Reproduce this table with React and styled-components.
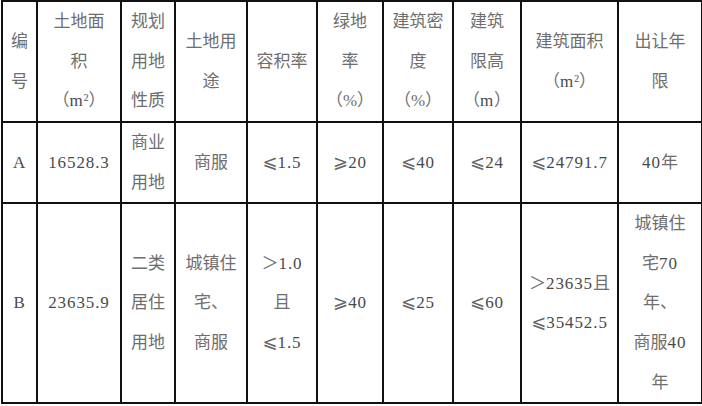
import React from 'react';
import styled, { createGlobalStyle } from 'styled-components';

const GlobalStyle = createGlobalStyle`
  html, body {
    margin: 0;
    padding: 0;
    background: #fff;
  }
  body {
    font-family: "Liberation Serif", "Noto Sans CJK SC", "DejaVu Sans", serif;
  }
`;

// column widths measured from the screenshot
const widths = [35, 84, 54, 72, 70, 66, 70, 68, 97, 84];

const header = [
  ['编', '号'],
  ['土地面', '积', '（m²）'],
  ['规划', '用地', '性质'],
  ['土地用', '途'],
  ['容积率'],
  ['绿地', '率', '（%）'],
  ['建筑密', '度', '（%）'],
  ['建筑', '限高', '（m）'],
  ['建筑面积', '（m²）'],
  ['出让年', '限'],
];

const rows = [
  {
    height: 81,
    cells: [
      ['A'],
      ['16528.3'],
      ['商业', '用地'],
      ['商服'],
      ['⩽1.5'],
      ['⩾20'],
      ['⩽40'],
      ['⩽24'],
      ['⩽24791.7'],
      ['40年'],
    ],
  },
  {
    height: 200,
    cells: [
      ['B'],
      ['23635.9'],
      ['二类', '居住', '用地'],
      ['城镇住', '宅、', '商服'],
      ['＞1.0', '且', '⩽1.5'],
      ['⩾40'],
      ['⩽25'],
      ['⩽60'],
      ['＞23635且', '⩽35452.5'],
      ['城镇住', '宅70', '年、', '商服40', '年'],
    ],
  },
];

const Page = styled.div`
  padding: 0 0 0 1px;
`;

const Table = styled.table`
  border-collapse: collapse;
  table-layout: fixed;
  width: 700px;
  color: #6e6e6e;
  font-size: 17px;
`;

const Row = styled.tr`
  height: ${(p) => p.$h}px;
`;

const Cell = styled.td`
  border: 2px solid #111;
  padding: 0;
  text-align: center;
  vertical-align: middle;
  line-height: 39.6px;
  white-space: nowrap;
  overflow: hidden;
`;

const Line = styled.div`
  height: 39.6px;
`;

// digits and latin letters are a little wider and darker in the original
const Latin = styled.span`
  color: #4a4a4a;
  letter-spacing: 0.9px;
`;

const Sign = styled.span`
  color: #666;
  font-size: 18px;
`;

const renderText = (t) =>
  t.split(/([0-9A-Za-z.]+|[⩽⩾])/).map((part, i) => {
    if (!part) return null;
    if (/^[0-9A-Za-z.]+$/.test(part)) return <Latin key={i}>{part}</Latin>;
    if (/^[⩽⩾]$/.test(part)) return <Sign key={i}>{part}</Sign>;
    return <React.Fragment key={i}>{part}</React.Fragment>;
  });

const renderLines = (lines) =>
  lines.map((t, i) => <Line key={i}>{renderText(t)}</Line>);

export default function App() {
  return (
    <Page>
      <GlobalStyle />
      <Table>
        <colgroup>
          {widths.map((w, i) => (
            <col key={i} style={{ width: w }} />
          ))}
        </colgroup>
        <tbody>
          <Row $h={121}>
            {header.map((c, i) => (
              <Cell key={i}>{renderLines(c)}</Cell>
            ))}
          </Row>
          {rows.map((r, ri) => (
            <Row key={ri} $h={r.height}>
              {r.cells.map((c, i) => (
                <Cell key={i}>{renderLines(c)}</Cell>
              ))}
            </Row>
          ))}
        </tbody>
      </Table>
    </Page>
  );
}
